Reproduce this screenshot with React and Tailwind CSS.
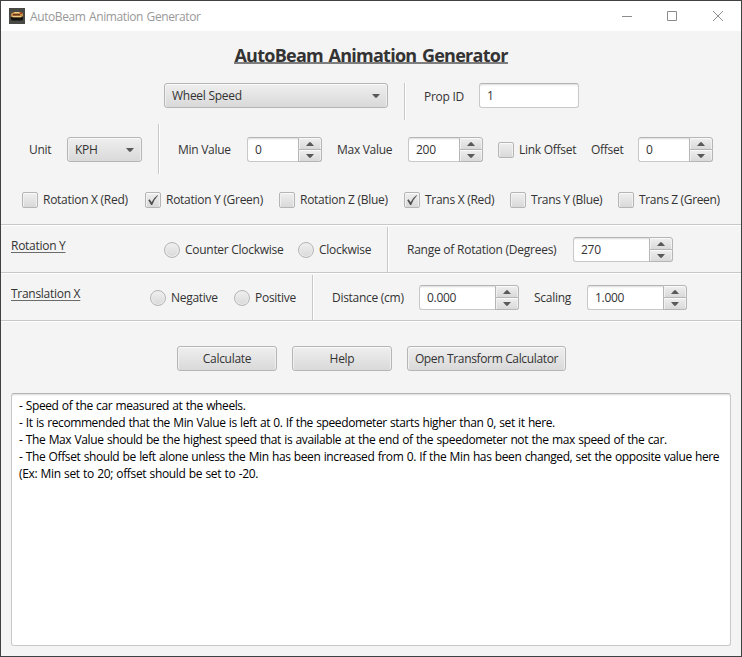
import React from "react";

const face =
  "border border-[#b5b5b5] bg-linear-to-b from-[#efefef] to-[#d9d9d9] shadow-[inset_0_1px_0_#fafafa,inset_1px_0_0_#f0f0f0,inset_-1px_0_0_#f0f0f0]";
const input =
  "border border-[#c8c8c8] border-t-[#b3b3b3] bg-white shadow-[inset_0_2px_2px_-1px_#dcdcdc]";

function Label({ className = "", children }) {
  return <span className={`block shrink-0 whitespace-nowrap ${className}`}>{children}</span>;
}

function Caret({ up }) {
  return (
    <svg width="8" height="4" viewBox="0 0 8 4" className="block">
      <path d={up ? "M0 4L3.3 .3H4.7L8 4Z" : "M0 0H8L4.7 3.7H3.3Z"} fill="#595959" />
    </svg>
  );
}

function Combo({ className, children }) {
  return (
    <button className={`flex h-[25px] shrink-0 items-center justify-between rounded-[3px] pl-[7px] pr-[7px] ${face} ${className}`}>
      <span>{children}</span>
      <Caret />
    </button>
  );
}

function Spinner({ className, value }) {
  return (
    <div className={`flex h-[25px] shrink-0 ${className}`}>
      <div className={`flex flex-1 items-center rounded-l-[3px] border-r-0 pl-[7px] ${input}`}>{value}</div>
      <div className="flex w-6 flex-col">
        <button className={`flex h-[13px] items-center justify-center rounded-tr-[3px] ${face}`}>
          <Caret up />
        </button>
        <button className={`flex h-3 items-center justify-center rounded-br-[3px] border-t-0 ${face}`}>
          <Caret />
        </button>
      </div>
    </div>
  );
}

function Check({ className = "", checked, label, labelClass = "" }) {
  return (
    <label className={`flex shrink-0 items-center gap-[5px] ${className}`}>
      <span className={`flex size-4 shrink-0 items-center justify-center rounded-[2px] ${face}`}>
        {checked && (
          <svg width="12" height="12" viewBox="0 0 12 12" className="block shrink-0">
            <path d="M1.3 6.2L2.7 5.2L4.6 8.2Q6.8 3.6 10.7 1L11 1.6Q7.4 5.4 5.2 11H4.1Z" fill="#505050" />
          </svg>
        )}
      </span>
      <Label className={labelClass}>{label}</Label>
    </label>
  );
}

function Radio({ className, label }) {
  return (
    <label className={`flex shrink-0 items-center gap-[5px] ${className}`}>
      <span className="size-4 shrink-0 rounded-full border border-[#b5b5b5] bg-linear-to-b from-[#f0f0f0] to-[#d9d9d9] shadow-[inset_0_0_0_1px_#ededed]" />
      <Label>{label}</Label>
    </label>
  );
}

function VLine({ className }) {
  return <div className={`w-0.5 shrink-0 border-l border-r border-l-[#c8c8c8] border-r-white ${className}`} />;
}

function Button({ className, children }) {
  return (
    <button className={`flex h-[25px] shrink-0 items-center justify-center whitespace-nowrap rounded-[3px] ${face} ${className}`}>
      {children}
    </button>
  );
}

export default function App() {
  return (
    <div className="flex h-[657px] w-[742px] flex-col overflow-hidden border border-[#414144] bg-[#f4f4f4] font-['Open_Sans','Noto_Sans',sans-serif] text-[12px] leading-[17px] tracking-[-0.28px] text-[#333]">
      <header className="flex h-[30px] shrink-0 items-center bg-white text-[#999]">
        <svg width="16" height="16" viewBox="0 0 16 16" className="ml-2 block">
          <path fill="#484944" d="M0 0H16V16H0Z" />
          <path fill="#11110f" d="M2 9H14V11.5L12.5 12.5H3.5L2 11.5Z" />
          <path fill="#c78d45" d="M3 5L5 4H11L14 5.5V8L12 9.5H4L2 8.5V6Z" />
          <path fill="#69391e" d="M4 6H11V7.5H4Z" />
          <path fill="#ead08b" d="M3 8H12V9H4ZM6 4H10V5H5Z" />
          <path fill="#b54026" d="M11 4.5H13V6H11Z" />
        </svg>
        <Label className="ml-[5px] w-[171px] tracking-[-0.4px] [word-spacing:0.8px]">AutoBeam Animation Generator</Label>
        <svg width="101" height="12" viewBox="0 0 101 12" className="ml-[421px] block" fill="none" stroke="#8c8c8c">
          <path d="M0 6.5H10M45.5 1.5H54.5V10.5H45.5Z" />
          <path d="M91 1L101 11M101 1L91 11" />
        </svg>
      </header>

      <h1 className="flex h-[52px] shrink-0 items-center justify-center text-[18px] leading-6 font-bold tracking-[-0.74px] [word-spacing:1.6px]">
        <span className="-mt-2 h-[22px] border-b-2 border-[#7d7d7d] leading-[26px] whitespace-nowrap">AutoBeam Animation Generator</span>
      </h1>

      <div className="flex h-[41px] shrink-0 items-start">
        <Combo className="ml-[163px] w-[224px]">Wheel Speed</Combo>
        <VLine className="ml-4 h-[37px]" />
        <Label className="mt-[5px] ml-[18px] w-10">Prop ID</Label>
        <div className={`ml-[15px] flex h-[25px] w-[100px] items-center rounded-[3px] pl-[7px] ${input}`}>1</div>
      </div>

      <div className="flex h-[51px] shrink-0 items-center">
        <Label className="ml-7 w-[38px]">Unit</Label>
        <Combo className="w-[75px]">KPH</Combo>
        <VLine className="ml-4 h-[50px] self-start" />
        <Label className="ml-[18px] w-[69px]">Min Value</Label>
        <Spinner className="w-[75px]" value="0" />
        <Label className="ml-[15px] w-[71px]">Max Value</Label>
        <Spinner className="w-[75px]" value="200" />
        <Check className="ml-[15px] w-[93px]" label="Link Offset" />
        <Label className="w-[47px]">Offset</Label>
        <Spinner className="w-[75px]" value="0" />
      </div>

      <div className="flex h-[50px] shrink-0 items-center border-b border-[#c8c8c8] pt-px pl-[21px]">
        <Check className="w-[123px]" labelClass="-mt-px" label="Rotation X (Red)" />
        <Check className="w-[134px]" labelClass="-mt-px" checked label="Rotation Y (Green)" />
        <Check className="w-[125px]" labelClass="-mt-px" label="Rotation Z (Blue)" />
        <Check className="w-[106px]" labelClass="-mt-px" checked label="Trans X (Red)" />
        <Check className="w-[108px]" labelClass="-mt-px tracking-[-0.35px]" label="Trans Y (Blue)" />
        <Check labelClass="-mt-px tracking-[-0.35px]" label="Trans Z (Green)" />
      </div>

      <div className="flex h-12 shrink-0 items-center border-t border-b border-t-white border-b-[#c8c8c8] pt-px">
        <Label className="-mt-2 ml-2.5 w-[153px] underline decoration-[#6b6b6b] underline-offset-2">Rotation Y</Label>
        <Radio className="w-[134px]" label="Counter Clockwise" />
        <Radio className="w-[89px]" label="Clockwise" />
        <VLine className="h-[45px] self-end" />
        <Label className="ml-[18px] w-[166px] tracking-[-0.24px]">Range of Rotation (Degrees)</Label>
        <Spinner className="w-[100px]" value="270" />
      </div>

      <div className="flex h-12 shrink-0 items-center border-t border-b border-t-white border-b-[#c8c8c8] pt-px">
        <Label className="-mt-2 ml-2.5 w-[139px] underline decoration-[#6b6b6b] underline-offset-2">Translation X</Label>
        <Radio className="w-[84px]" label="Negative" />
        <Radio className="w-[78px]" label="Positive" />
        <VLine className="h-[45px] self-end" />
        <Label className="ml-[18px] w-[87px]">Distance (cm)</Label>
        <Spinner className="w-[100px]" value="0.000" />
        <Label className="ml-[15px] w-[53px]">Scaling</Label>
        <Spinner className="w-[100px]" value="1.000" />
      </div>

      <div className="flex h-[72px] shrink-0 gap-[15px] border-t border-white pt-6 pl-[176px]">
        <Button className="w-[100px]">Calculate</Button>
        <Button className="w-[100px]">Help</Button>
        <Button className="w-[159px] tracking-[-0.35px]">Open Transform Calculator</Button>
      </div>

      <div className={`mx-2.5 h-[253px] shrink-0 rounded-[3px] px-[7px] pt-[3px] whitespace-nowrap text-black [word-spacing:0.6px] ${input}`}>
        <p className="tracking-[-0.4px]">- Speed of the car measured at the wheels.</p>
        <p className="tracking-[-0.4px]">- It is recommended that the Min Value is left at 0. If the speedometer starts higher than 0, set it here.</p>
        <p className="tracking-[-0.39px]">- The Max Value should be the highest speed that is available at the end of the speedometer not the max speed of the car.</p>
        <p className="tracking-[-0.4px]">- The Offset should be left alone unless the Min has been increased from 0. If the Min has been changed, set the opposite value here</p>
        <p className="tracking-[-0.36px]">(Ex: Min set to 20; offset should be set to -20.</p>
      </div>
    </div>
  );
}
